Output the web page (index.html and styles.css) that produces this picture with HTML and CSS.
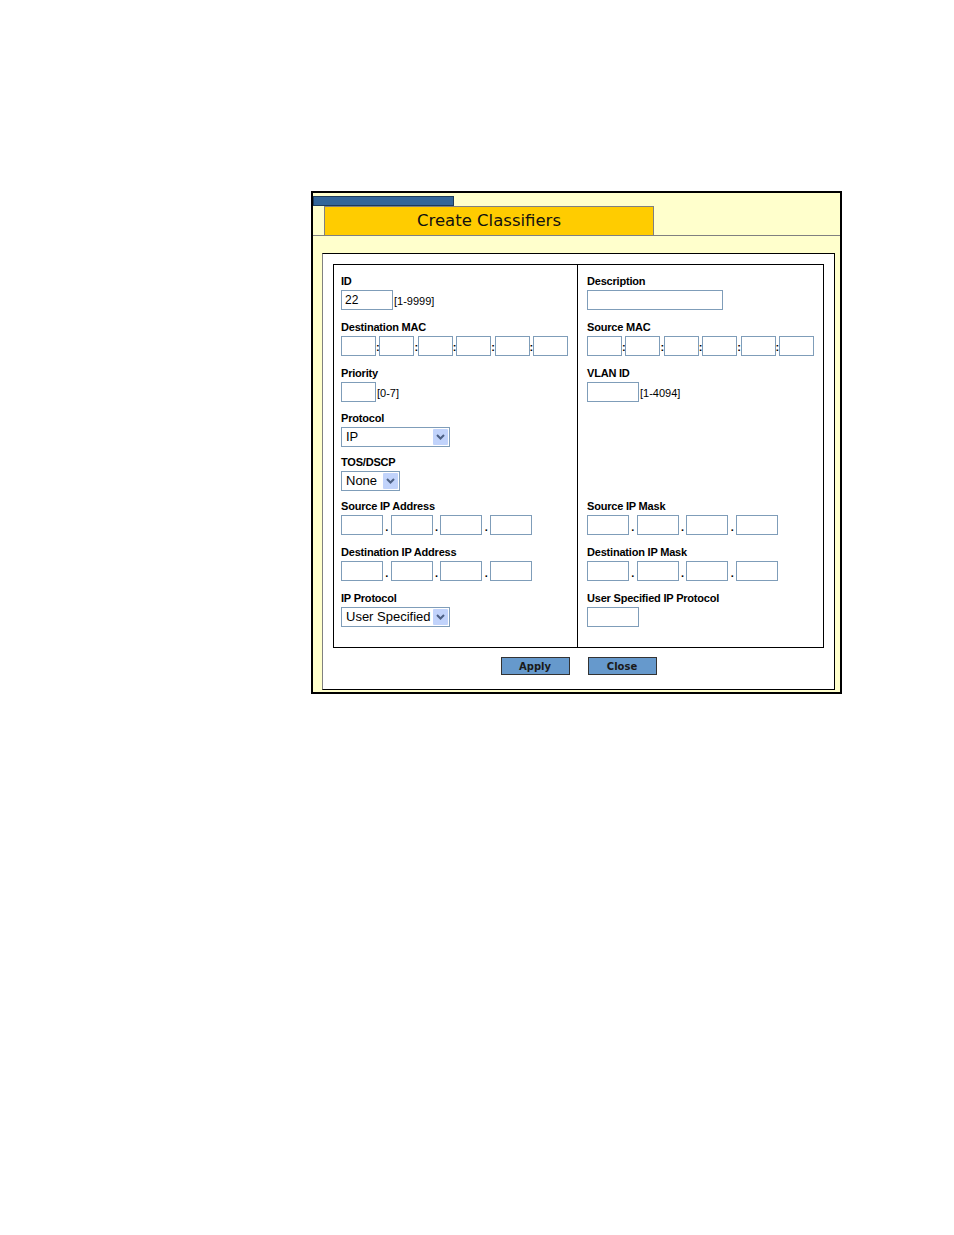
FILE: index.html
```html
<!DOCTYPE html>
<html lang="en">
<head>
    <meta charset="UTF-8">
    <title>Create Classifiers</title>
    <link rel="stylesheet" href="styles.css">
</head>
<body>
<div class="page">
    <div class="frame">
        <div class="tab-strip"></div>
        <div class="tab-row">
            <div class="tab-title">Create Classifiers</div>
        </div>

        <div class="panel">
            <div class="fields">
                <!-- row 1 -->
                <div class="cell left first">
                    <div class="label">ID</div>
                    <div class="inline">
                        <input class="box w52" value="22">
                        <span class="hint">[1-9999]</span>
                    </div>
                </div>
                <div class="cell right first">
                    <div class="label">Description</div>
                    <div class="inline"><input class="box w136"></div>
                </div>

                <!-- row 2 -->
                <div class="cell left">
                    <div class="label">Destination MAC</div>
                    <div class="inline">
                        <input class="box w35"><span class="colon">:</span>
                        <input class="box w35"><span class="colon">:</span>
                        <input class="box w35"><span class="colon">:</span>
                        <input class="box w35"><span class="colon">:</span>
                        <input class="box w35"><span class="colon">:</span>
                        <input class="box w35">
                    </div>
                </div>
                <div class="cell right">
                    <div class="label">Source MAC</div>
                    <div class="inline">
                        <input class="box w35"><span class="colon">:</span>
                        <input class="box w35"><span class="colon">:</span>
                        <input class="box w35"><span class="colon">:</span>
                        <input class="box w35"><span class="colon">:</span>
                        <input class="box w35"><span class="colon">:</span>
                        <input class="box w35">
                    </div>
                </div>

                <!-- row 3 -->
                <div class="cell left">
                    <div class="label">Priority</div>
                    <div class="inline">
                        <input class="box w35">
                        <span class="hint">[0-7]</span>
                    </div>
                </div>
                <div class="cell right">
                    <div class="label">VLAN ID</div>
                    <div class="inline">
                        <input class="box w52">
                        <span class="hint">[1-4094]</span>
                    </div>
                </div>

                <!-- row 4 -->
                <div class="cell left">
                    <div class="label">Protocol</div>
                    <div class="select w109">
                        <span class="select-value">IP</span>
                        <span class="select-arrow"><svg width="9" height="6" viewBox="0 0 9 6"><path d="M1 1L4.5 4.5L8 1" fill="none" stroke="#4d6185" stroke-width="2"/></svg></span>
                    </div>
                </div>
                <div class="cell right"></div>

                <!-- row 5 -->
                <div class="cell left">
                    <div class="label">TOS/DSCP</div>
                    <div class="select w59">
                        <span class="select-value">None</span>
                        <span class="select-arrow"><svg width="9" height="6" viewBox="0 0 9 6"><path d="M1 1L4.5 4.5L8 1" fill="none" stroke="#4d6185" stroke-width="2"/></svg></span>
                    </div>
                </div>
                <div class="cell right"></div>

                <!-- row 6 -->
                <div class="cell left">
                    <div class="label">Source IP Address</div>
                    <div class="inline">
                        <input class="box w42"><span class="dot">.</span>
                        <input class="box w42"><span class="dot">.</span>
                        <input class="box w42"><span class="dot">.</span>
                        <input class="box w42">
                    </div>
                </div>
                <div class="cell right">
                    <div class="label">Source IP Mask</div>
                    <div class="inline">
                        <input class="box w42"><span class="dot">.</span>
                        <input class="box w42"><span class="dot">.</span>
                        <input class="box w42"><span class="dot">.</span>
                        <input class="box w42">
                    </div>
                </div>

                <!-- row 7 -->
                <div class="cell left">
                    <div class="label">Destination IP Address</div>
                    <div class="inline">
                        <input class="box w42"><span class="dot">.</span>
                        <input class="box w42"><span class="dot">.</span>
                        <input class="box w42"><span class="dot">.</span>
                        <input class="box w42">
                    </div>
                </div>
                <div class="cell right">
                    <div class="label">Destination IP Mask</div>
                    <div class="inline">
                        <input class="box w42"><span class="dot">.</span>
                        <input class="box w42"><span class="dot">.</span>
                        <input class="box w42"><span class="dot">.</span>
                        <input class="box w42">
                    </div>
                </div>

                <!-- row 8 -->
                <div class="cell left">
                    <div class="label">IP Protocol</div>
                    <div class="select w109">
                        <span class="select-value">User Specified</span>
                        <span class="select-arrow"><svg width="9" height="6" viewBox="0 0 9 6"><path d="M1 1L4.5 4.5L8 1" fill="none" stroke="#4d6185" stroke-width="2"/></svg></span>
                    </div>
                </div>
                <div class="cell right">
                    <div class="label">User Specified IP Protocol</div>
                    <div class="inline"><input class="box w52"></div>
                </div>
            </div>

            <div class="actions">
                <button class="btn">Apply</button>
                <button class="btn">Close</button>
            </div>
        </div>
    </div>
</div>
</body>
</html>
```

FILE: styles.css
```css
body {
    margin: 0;
    background: #fff;
    font-family: "Liberation Sans", Arial, sans-serif;
    color: #000;
}

.page {
    padding: 191px 0 0 311px;
}

.frame {
    width: 527px;
    border: 2px solid #000;
    background: #ffffcc;
    padding-bottom: 2px;
}

.tab-strip {
    box-sizing: border-box;
    width: 141px;
    height: 10px;
    margin-top: 3px;
    background: #336699;
    border: 1px solid #1d3b5a;
}

.tab-row {
    padding-left: 11px;
    border-bottom: 1px solid #808080;
}

.tab-title {
    box-sizing: border-box;
    width: 330px;
    height: 29px;
    background: #ffcc00;
    border: 1px solid #808080;
    border-bottom: none;
    text-align: center;
    font-family: "DejaVu Sans", Verdana, sans-serif;
    font-size: 16.5px;
    line-height: 28px;
    color: #111;
}

.panel {
    width: 491px;
    margin: 17px 0 0 9px;
    padding: 10px 10px 14px 10px;
    background: #fff;
    border: 1px solid #000;
    border-left-color: #808080;
}

.fields {
    display: grid;
    grid-template-columns: 244px 1fr;
    grid-template-rows: 56px 46px 45px 44px 44px 46px 46px 55px;
    border: 1px solid #000;
}

.cell {
    display: flex;
    flex-direction: column;
    align-items: flex-start;
}

.cell.left {
    padding-left: 7px;
    border-right: 1px solid #000;
}

.cell.right {
    padding-left: 9px;
}

.cell.first {
    padding-top: 10px;
}

.label {
    font-size: 11px;
    font-weight: bold;
    line-height: 13px;
    letter-spacing: -0.2px;
    margin-bottom: 2px;
}

.inline {
    display: flex;
    align-items: flex-end;
}

.box {
    box-sizing: border-box;
    height: 20px;
    margin: 0;
    padding: 0 3px;
    border: 1px solid #7f9db9;
    background: #fff;
    font-family: "Liberation Sans", Arial, sans-serif;
    font-size: 12px;
    color: #000;
    outline: none;
}

.w35 { width: 35px; }
.w42 { width: 42px; }
.w52 { width: 52px; }
.w136 { width: 136px; }

.hint {
    font-size: 11px;
    line-height: 13px;
    margin: 0 0 2px 1px;
}

.colon {
    width: 3.4px;
    font-size: 11px;
    font-weight: bold;
    line-height: 13px;
    text-align: center;
    margin-bottom: 2px;
}

.dot {
    width: 7.7px;
    font-size: 11px;
    font-weight: bold;
    line-height: 13px;
    text-align: center;
    margin-bottom: 1px;
}

.select {
    box-sizing: border-box;
    display: flex;
    height: 20px;
    padding: 1px;
    border: 1px solid #7f9db9;
    background: #fff;
}

.w109 { width: 109px; }
.w59 { width: 59px; }

.select-value {
    flex: 1;
    padding-left: 3px;
    font-size: 13px;
    line-height: 16px;
    white-space: nowrap;
    overflow: hidden;
}

.select-arrow {
    width: 15px;
    display: flex;
    align-items: center;
    justify-content: center;
    background: #c1d3fb;
    border-radius: 1px;
}

.actions {
    display: flex;
    justify-content: center;
    gap: 18px;
    margin-top: 9px;
}

.btn {
    box-sizing: border-box;
    width: 69px;
    height: 18px;
    padding: 0;
    background: #6699cc;
    border: 1px solid #333;
    font-family: "DejaVu Sans", Verdana, sans-serif;
    font-size: 10px;
    font-weight: bold;
    color: #1a1a1a;
    cursor: pointer;
}
```
